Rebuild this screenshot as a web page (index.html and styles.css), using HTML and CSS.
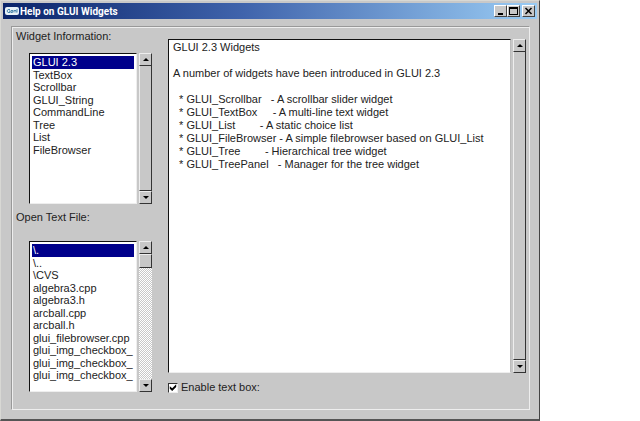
FILE: index.html
```
<!DOCTYPE html>
<html lang="en">
<head>
  <meta charset="UTF-8">
  <meta name="viewport" content="width=device-width, initial-scale=1.0">
  <title>Help on GLUI Widgets</title>
  <link rel="stylesheet" href="styles.css">
</head>
<body>

  <div class="window">
    <!-- Title bar -->
    <div class="title-bar">
      <svg class="app-icon" width="14" height="10" viewBox="0 0 14 10" aria-hidden="true">
        <rect y="1" width="14" height="8" rx="2" fill="#e8f2f8"/>
        <path d="M5 3.500H3L2 5l1 1.500h2V5H4M6 4.500h2L7.500 6.500H6zM9 6.500v-2l2 0v2M12 3v3.500" fill="none" stroke="#4a87ae"/>
      </svg>
      <h1>Help on GLUI Widgets</h1>
      <button class="win-button" aria-label="Minimize">
        <svg width="9" height="8" viewBox="0 0 9 8"><path d="M2 6h5v2H2z"/></svg>
      </button>
      <button class="win-button" aria-label="Maximize">
        <svg width="9" height="8" viewBox="0 0 9 8"><path d="M0 0h9v8H0zM1 2v5h7V2z" fill-rule="evenodd"/></svg>
      </button>
      <button class="win-button close" aria-label="Close">
        <svg width="9" height="8" viewBox="0 0 9 8"><path d="M1.500 1l6 6M7.500 1l-6 6" fill="none" stroke="#000" stroke-width="1.500"/></svg>
      </button>
    </div>

    <div class="panel">
      <!-- Lists -->
      <div class="side">
        <label for="widgets">Widget Information:</label>
        <div class="list-row">
          <select id="widgets" size="8">
            <option selected>GLUI 2.3</option>
            <option>TextBox</option>
            <option>Scrollbar</option>
            <option>GLUI_String</option>
            <option>CommandLine</option>
            <option>Tree</option>
            <option>List</option>
            <option>FileBrowser</option>
          </select>
          <div class="scrollbar">
            <button class="arrow up" aria-label="Scroll up"></button>
            <div class="track"></div>
            <button class="arrow down" aria-label="Scroll down"></button>
          </div>
        </div>

        <label for="files">Open Text File:</label>
        <div class="list-row">
          <select id="files" size="11">
            <option selected>\.</option>
            <option>\..</option>
            <option>\CVS</option>
            <option>algebra3.cpp</option>
            <option>algebra3.h</option>
            <option>arcball.cpp</option>
            <option>arcball.h</option>
            <option>glui_filebrowser.cpp</option>
            <option>glui_img_checkbox_</option>
            <option>glui_img_checkbox_</option>
            <option>glui_img_checkbox_</option>
          </select>
          <div class="scrollbar">
            <button class="arrow up" aria-label="Scroll up"></button>
            <div class="track dotted"><div class="thumb"></div></div>
            <button class="arrow down" aria-label="Scroll down"></button>
          </div>
        </div>
      </div>

      <!-- Help text -->
      <div class="main">
        <div class="text-row">
          <textarea readonly wrap="off" aria-label="Help text">GLUI 2.3 Widgets

A number of widgets have been introduced in GLUI 2.3

  * GLUI_Scrollbar   - A scrollbar slider widget
  * GLUI_TextBox     - A multi-line text widget
  * GLUI_List        - A static choice list
  * GLUI_FileBrowser - A simple filebrowser based on GLUI_List
  * GLUI_Tree        - Hierarchical tree widget
  * GLUI_TreePanel   - Manager for the tree widget</textarea>
          <div class="scrollbar">
            <button class="arrow up" aria-label="Scroll up"></button>
            <div class="track"></div>
            <button class="arrow down" aria-label="Scroll down"></button>
          </div>
        </div>
        <div class="check-row">
          <input type="checkbox" id="enable" checked>
          <label for="enable">Enable text box:</label>
        </div>
      </div>
    </div>
  </div>

</body>
</html>
```
FILE: styles.css
```
* {
  box-sizing: border-box;
}

body {
  margin: 0;
  background-color: #fff;
  color: #222;
}

body,
select,
textarea {
  font-family: "Liberation Sans", Arial, sans-serif;
  font-size: 11px;
  line-height: 13px;
}

button {
  padding: 0;
  background-color: #c8c8c8;
}

.window {
  width: calc(100% - 100px);
  min-height: 100vh;
  padding: 2px;
  background-color: #c8c8c8;
  border: 1px solid #d8d8d4;
  border-right-color: #444;
  border-bottom: 2px solid #555;
  display: flex;
  flex-direction: column;
}

/* Title bar */
.title-bar {
  display: flex;
  align-items: center;
  height: 16px;
  padding: 0 2px;
  background: linear-gradient(to right, #0a246a, #4064ac 45%, #9accf4);
}

.title-bar h1 {
  flex: 1;
  margin: 0 0 0 1px;
  font-family: Roboto, sans-serif;
  font-size: 10px;
  font-weight: bold;
  color: #fff;
}

.win-button {
  display: flex;
  align-items: center;
  justify-content: center;
  width: 13px;
  height: 12px;
  border: 1px solid;
  border-color: #fff #444 #444 #fff;
}

.win-button.close {
  margin-left: 2px;
}

/* Framed panel */
.panel {
  flex: 1;
  display: flex;
  margin: 7px 7px 7px 8px;
  padding: 3px;
  border: 1px solid #999;
  border-right-color: #eee;
  border-bottom-color: #eee;
  box-shadow: inset 1px 1px #eee;
}

.side {
  width: 137px;
  margin-right: 16px;
}

.side label {
  display: block;
  padding-left: 1px;
}

.list-row {
  display: flex;
  height: 151px;
  margin: 10px 0 7px 14px;
}

.side .list-row:last-child {
  margin-top: 17px;
}

select,
textarea {
  flex: 1;
  min-width: 0;
  margin: 0;
  border: 1px solid;
  border-color: #111 #eee #eee #111;
  border-radius: 0;
  outline: none;
  background-color: #fff;
  color: #222;
  overflow: hidden;
  resize: none;
}

select {
  padding: 2px;
}

option {
  height: 12px;
  min-height: 0;
  padding: 0 1px;
  line-height: 12px;
}

option:nth-child(odd) {
  height: 13px;
}

option:checked {
  background: #00008b linear-gradient(#00008b, #00008b);
  color: #fff;
}

textarea {
  padding: 1px 4px;
}

/* Scrollbars */
.scrollbar {
  display: flex;
  flex-direction: column;
  width: 13px;
  margin-left: 2px;
}

.arrow {
  display: flex;
  align-items: center;
  justify-content: center;
  width: 13px;
  height: 13px;
  border: 1px solid;
  border-color: #eee #333 #333 #eee;
}

.arrow::before {
  content: "";
  border: 3px solid transparent;
}

.arrow.up::before {
  border-top: 0;
  border-bottom-color: #000;
}

.arrow.down::before {
  border-bottom: 0;
  border-top-color: #000;
}

.track {
  flex: 1;
  border-right: 1px solid #333;
  border-left: 1px solid #eee;
  border-bottom: 1px solid #333;
}

.track.dotted {
  border: none;
  background: repeating-conic-gradient(#fff 0 25%, #c8c8c8 0 50%) 0 0 / 2px 2px;
}

.thumb {
  height: 14px;
  background-color: #c8c8c8;
  border: 1px solid;
  border-color: #eee #333 #333 #eee;
}

/* Text box side */
.main {
  flex: 1;
  display: flex;
  flex-direction: column;
  padding-top: 9px;
}

.text-row {
  display: flex;
  height: 334px;
}

.text-row .scrollbar {
  margin-left: 2px;
}

.text-row textarea {
  border-right-color: #bbb;
}

.check-row {
  display: flex;
  align-items: center;
  margin-top: 8px;
}

.check-row input {
  appearance: none;
  width: 10px;
  height: 10px;
  margin: 0 3px 0 0;
  border: 1px solid;
  border-color: #333 #eee #eee #333;
  background-color: #fff;
}

.check-row input:checked::before {
  content: "";
  display: block;
  width: 8px;
  height: 8px;
  background-color: #000;
  clip-path: polygon(10% 35%, 40% 60%, 90% 10%, 90% 45%, 40% 95%, 10% 65%);
}
```
